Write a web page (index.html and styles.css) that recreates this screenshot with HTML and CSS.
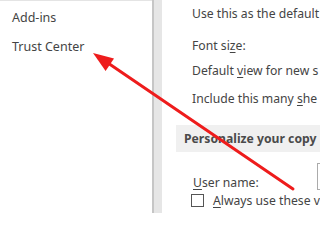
FILE: index.html
```html
<!DOCTYPE html>
<html>
<head>
<meta charset="utf-8">
<link rel="stylesheet" href="styles.css">
</head>
<body>
<div class="window">
  <nav class="nav">
    <div class="nav-item first">Add-ins</div>
    <div class="nav-item">Trust Center</div>
  </nav>
  <div class="divider"><div class="divider-line"></div><div class="divider-fill"></div></div>
  <main class="content">
    <div class="row r1">Use this as the default</div>
    <div class="row r2">Font si<u>z</u>e:</div>
    <div class="row r3">Default <u>v</u>iew for new s</div>
    <div class="row r4">Include this many <u>s</u>he</div>
    <div class="section">Personalize your copy</div>
    <div class="user-row">
      <span class="user-label"><u>U</u>ser name:</span>
      <span class="user-input"></span>
    </div>
    <div class="check-row">
      <span class="checkbox"></span>
      <span><u>A</u>lways use these v</span>
    </div>
  </main>
  <svg class="arrow" width="320" height="213" viewBox="0 0 320 213">
    <line x1="293" y1="189" x2="105" y2="61" stroke="#ee1c1c" stroke-width="3" stroke-linecap="round"/>
    <polygon points="93,53 105.6,71 114,58.6" fill="#ee1c1c"/>
  </svg>
</div>
</body>
</html>
```
FILE: styles.css
```css
html, body {
  margin: 0;
  padding: 0;
  background: #ffffff;
}
.window {
  position: relative;
  width: 320px;
  height: 213px;
  overflow: hidden;
  display: flex;
  font-family: "Noto Sans", "Open Sans", sans-serif;
  font-size: 12.5px;
  color: #444444;
}
.nav {
  width: 152px;
  flex: none;
  border-top: 1px solid #e4e4e4;
  box-sizing: border-box;
  padding-left: 12px;
}
.nav-item {
  height: 29px;
  line-height: 29px;
  white-space: nowrap;
  color: #444444;
}
.nav-item.first {
  margin-top: 2px;
}
.divider {
  display: flex;
  flex: none;
  width: 10px;
}
.divider-line {
  width: 2px;
  background: #c6c6c6;
}
.divider-fill {
  flex: 1;
  background: #e6e6e6;
}
.content {
  flex: 1;
  min-width: 0;
  white-space: nowrap;
  font-size: 12.2px;
}
.row {
  padding-left: 30px;
  height: 20px;
  line-height: 20px;
}
.r1 { margin-top: 4px; }
.r2 { margin-top: 12px; }
.r3 { margin-top: 5px; }
.r4 { margin-top: 8px; }
.section {
  margin-top: 16px;
  margin-left: 14px;
  height: 27px;
  line-height: 27px;
  padding-left: 8px;
  background: #f0f0f0;
  font-weight: bold;
  color: #4a4a4a;
}
.user-row {
  display: flex;
  align-items: flex-end;
  margin-top: 11px;
  padding-left: 31px;
  height: 27px;
}
.user-label {
  width: 124px;
  flex: none;
  line-height: 14px;
}
.user-input {
  width: 40px;
  height: 27px;
  border: 1px solid #ababab;
  box-sizing: border-box;
  flex: none;
}
.check-row {
  display: flex;
  align-items: center;
  margin-top: 2px;
  padding-left: 29px;
  height: 16px;
  gap: 9px;
}
.checkbox {
  width: 13px;
  height: 13px;
  border: 1px solid #555555;
  box-sizing: border-box;
  flex: none;
  background: #ffffff;
}
u {
  text-decoration-thickness: 1px;
  text-underline-offset: 2px;
}
.arrow {
  position: absolute;
  left: 0;
  top: 0;
}
```
